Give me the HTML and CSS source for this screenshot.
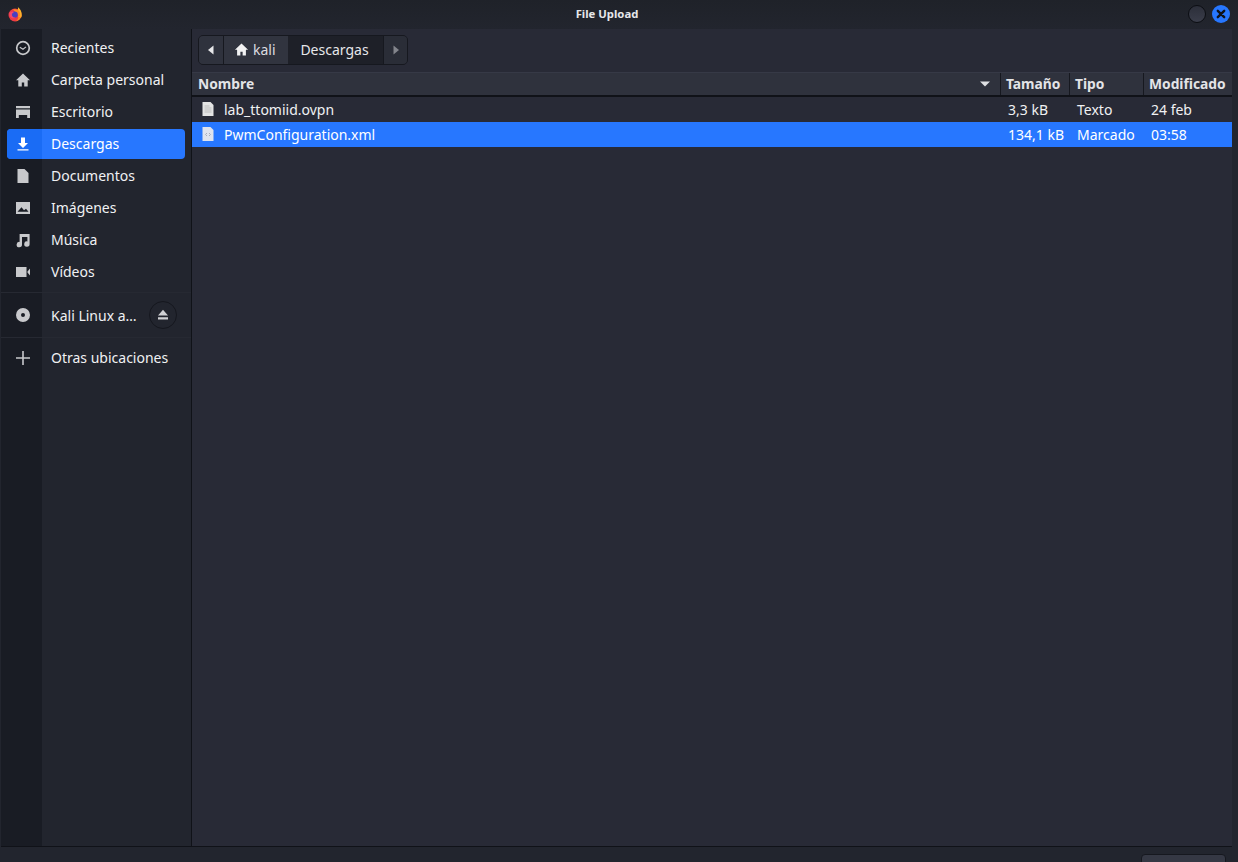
FILE: index.html
```
<!DOCTYPE html>
<html lang="es">
<head>
<meta charset="utf-8">
<title>File Upload</title>
<link rel="stylesheet" href="styles.css">
</head>
<body>
<div class="window">
  <header class="titlebar">
    <svg class="app-logo" viewBox="0 0 16 16" width="16" height="16">
      <circle cx="8" cy="9" r="6.500" fill="#ee3a45"/>
      <path d="M14.800 9.500C15 5.500 13 2.500 10.800 1c.5 1.500.2 2.600-.4 3.200C11.800 5 12.600 6.800 12.300 8.800L11 11l3 1z" fill="#fdb32b"/>
      <path d="M6 3.600C8.500 2.800 11 3.600 12.300 5.500 13.600 7.500 13.500 10.500 11.500 12.300 13.500 11.500 14.800 10 14.800 8 15 11.500 12 15 8.500 15.400 11 14 12 11.500 11 9z" fill="#ff8a1f"/>
      <circle cx="7.600" cy="8.600" r="3.200" fill="#4a3fc0"/>
      <path d="M2.800 6.600C4 5.600 6 5.500 7 6.200 5.400 6.800 4.600 8 5 9.500 5.400 11 7 11.800 8.400 11.500 7 12.800 4.600 12.600 3.300 11 2.400 9.800 2.300 8 2.800 6.600z" fill="#f4486a"/>
    </svg>
    <span class="title">File Upload</span>
    <div class="wm-buttons">
      <span class="wm-min"></span>
      <span class="wm-close">
        <svg viewBox="0 0 16 16" width="16" height="16"><path d="M4.800 4.800l6.400 6.400M11.200 4.800l-6.400 6.400" stroke="#10131a" stroke-width="2.400" stroke-linecap="round"/></svg>
      </span>
    </div>
  </header>

  <div class="body-row">
    <nav class="sidebar">
      <a class="place">
        <span class="place-icon"><svg viewBox="0 0 16 16" width="16" height="16"><circle cx="8" cy="8" r="6.300" fill="none" stroke="#c8c9cc" stroke-width="1.700"/><path d="M4.800 7.300L8 9.300l3-2.400" fill="none" stroke="#c8c9cc" stroke-width="1.200"/></svg></span>
        <span class="place-label">Recientes</span>
      </a>
      <a class="place">
        <span class="place-icon"><svg viewBox="0 0 16 16" width="16" height="16"><path d="M8 1.500L1 8.300h2.300V14.500h3.500v-4h2.400v4h3.500V8.300H15z" fill="#c8c9cc"/></svg></span>
        <span class="place-label">Carpeta personal</span>
      </a>
      <a class="place">
        <span class="place-icon"><svg viewBox="0 0 16 16" width="16" height="16"><path d="M1 2h14v2.300H1zM1 5.500h14V14h-2.800v-3H3.800v3H1z" fill="#c8c9cc"/></svg></span>
        <span class="place-label">Escritorio</span>
      </a>
      <a class="place place-active">
        <span class="place-icon"><svg viewBox="0 0 16 16" width="16" height="16"><path d="M6 1.500h4v5.500h3L8 12 3 7h3zM2.500 13.200h11v1.400h-11z" fill="#fff"/></svg></span>
        <span class="place-label">Descargas</span>
      </a>
      <a class="place">
        <span class="place-icon"><svg viewBox="0 0 16 16" width="16" height="16"><path d="M2.500 1h7l4 4v10h-11z" fill="#c8c9cc"/></svg></span>
        <span class="place-label">Documentos</span>
      </a>
      <a class="place">
        <span class="place-icon"><svg viewBox="0 0 16 16" width="16" height="16"><path fill-rule="evenodd" d="M1 2h14v12H1zM2.500 11.800h11L11 8.800l-2 1.500-2.500-3z" fill="#c8c9cc"/></svg></span>
        <span class="place-label">Imágenes</span>
      </a>
      <a class="place">
        <span class="place-icon"><svg viewBox="0 0 16 16" width="16" height="16"><path d="M4.600 2h10v10a2.700 2.700 0 1 1-2.200-2.600V5H7v7.500a2.700 2.700 0 1 1-2.400-2.600z" fill="#c8c9cc"/></svg></span>
        <span class="place-label">Música</span>
      </a>
      <a class="place">
        <span class="place-icon"><svg viewBox="0 0 16 16" width="16" height="16"><path d="M1 3h10.500v10H1zM12.500 7.500l2.500-3v7l-2.500-3z" fill="#c8c9cc"/></svg></span>
        <span class="place-label">Vídeos</span>
      </a>
      <div class="sep sep-first"></div>
      <a class="place place-volume">
        <span class="place-icon"><svg viewBox="0 0 16 16" width="16" height="16"><path fill-rule="evenodd" d="M8 1a7 7 0 1 1 0 14A7 7 0 0 1 8 1zm0 5a2 2 0 1 0 0 4 2 2 0 0 0 0-4z" fill="#c8c9cc"/></svg></span>
        <span class="place-label">Kali Linux a…</span>
        <span class="eject"><svg viewBox="0 0 16 16" width="16" height="16"><path d="M8 2.800l5 5.700H3zM3 10.300h10v2.200H3z" fill="#d0d1d4"/></svg></span>
      </a>
      <div class="sep sep-second"></div>
      <a class="place place-other">
        <span class="place-icon"><svg viewBox="0 0 16 16" width="16" height="16"><path d="M7.200 1h1.600v6.200H15v1.600H8.800V15H7.200V8.800H1V7.200h6.200z" fill="#c8c9cc"/></svg></span>
        <span class="place-label">Otras ubicaciones</span>
      </a>
    </nav>

    <main class="content">
      <div class="pathbar">
        <div class="path-group">
          <span class="path-btn path-arrow"><svg viewBox="0 0 16 16" width="16" height="16"><path d="M10.500 3.500v9L5 8z" fill="#e8e8ea"/></svg></span>
          <span class="path-btn path-home"><svg viewBox="0 0 16 16" width="16" height="16"><path d="M8 1.500L1 8.300h2.300V14.500h3.500v-4h2.400v4h3.500V8.300H15z" fill="#f2f2f3"/></svg><span>kali</span></span>
          <span class="path-btn path-current">Descargas</span>
          <span class="path-btn path-arrow path-next"><svg viewBox="0 0 16 16" width="16" height="16"><path d="M5.500 3.500v9L11 8z" fill="#83858c"/></svg></span>
        </div>
      </div>
      <div class="table">
        <div class="row header">
          <span class="col col-name col-name-head"><span>Nombre</span><svg viewBox="0 0 12 12" width="12" height="12"><path d="M1 3.500h10L6 8.500z" fill="#dfe0e3"/></svg></span>
          <span class="col col-size">Tamaño</span>
          <span class="col col-type">Tipo</span>
          <span class="col col-date">Modificado</span>
        </div>
        <div class="row file">
          <span class="col col-name">
            <svg class="file-icon" viewBox="0 0 14 16" width="14" height="16"><path d="M1.500 1h8l3 3v11h-11z" fill="#e4e4e4"/><path d="M3.500 5h5M3.500 7h7M3.500 9h7M3.500 11h7" stroke="#bdbdbd"/></svg>
            <span>lab_ttomiid.ovpn</span>
          </span>
          <span class="col col-size">3,3 kB</span>
          <span class="col col-type">Texto</span>
          <span class="col col-date">24 feb</span>
        </div>
        <div class="row file file-selected">
          <span class="col col-name">
            <svg class="file-icon" viewBox="0 0 14 16" width="14" height="16"><path d="M1.500 1h8l3 3v11h-11z" fill="#dfe3ee"/><path d="M6 7L4.500 8.500 6 10M8 7l1.500 1.500L8 10" fill="none" stroke="#a9aebb"/></svg>
            <span>PwmConfiguration.xml</span>
          </span>
          <span class="col col-size">134,1 kB</span>
          <span class="col col-type">Marcado</span>
          <span class="col col-date">03:58</span>
        </div>
      </div>
    </main>
  </div>

  <footer class="footer">
    <span class="footer-btn"></span>
  </footer>
</div>
</body>
</html>
```
FILE: styles.css
```
* { box-sizing: border-box; }
html, body { margin: 0; height: 100%; }
body {
  background: #22252e;
  color: #f0f1f3;
  font-family: "Noto Sans", "Open Sans", sans-serif;
  font-size: 14px;
  overflow: hidden;
}
.window { display: flex; flex-direction: column; width: 1238px; height: 862px; }

.titlebar {
  height: 29px;
  flex: none;
  display: flex;
  align-items: center;
  position: relative;
  padding-left: 7px;
  padding-bottom: 2px;
  background: linear-gradient(#1f2229, #22252e);
}
.app-logo { display: block; }
.title {
  position: absolute;
  left: 0; right: 0;
  top: 6px;
  text-align: center;
  font-size: 11.300px;
  font-weight: 700;
  line-height: 15px;
  color: #e6e7ea;
  padding-right: 24px;
  pointer-events: none;
}
.wm-buttons { margin-left: auto; display: flex; gap: 6px; padding-right: 8px; }
.wm-min, .wm-close { width: 18px; height: 18px; border-radius: 50%; display: flex; align-items: center; justify-content: center; }
.wm-min { background: linear-gradient(#2c2f3a, #3a3d4a); border: 1px solid #0c0e13; }
.wm-close { background: #2777ff; }

.body-row {
  flex: 1;
  display: flex;
  min-height: 0;
  margin: 0 6px 0 1px;
  border-bottom: 1px solid #101218;
}

.sidebar {
  width: 191px;
  flex: none;
  padding: 3px 0 0;
  background: linear-gradient(90deg, #191c24 41px, #22252e 41px);
  border-right: 1px solid #101218;
}
.place {
  display: flex;
  align-items: center;
  height: 32px;
  color: #f0f1f3;
}
.place-icon { width: 41px; flex: none; display: flex; justify-content: center; padding-left: 3px; }
.place-icon svg { display: block; }
.place-label { padding-left: 9px; padding-bottom: 1px; white-space: nowrap; }
.place-active {
  margin: 1px 6px;
  height: 30px;
  border-radius: 4px;
  background: #2777ff;
  color: #fff;
  overflow: hidden;
}
.place-active .place-icon {
  width: 35px;
  align-self: stretch;
  align-items: center;
  background: #1a6cf5;
  padding-left: 0;
  padding-right: 3px;
}
.sep { height: 1px; background: #262932; }
.sep-first { margin-top: 4px; }
.place-volume { height: 44px; }
.place-volume .place-label { flex: 1; min-width: 0; padding-bottom: 0; }
.eject {
  width: 28px;
  height: 28px;
  margin-right: 14px;
  border-radius: 50%;
  border: 1px solid #15171e;
  display: flex;
  align-items: center;
  justify-content: center;
  background: #22252e;
}
.place-other { height: 40px; }
.place-other .place-label { padding-bottom: 2px; }

.content { flex: 1; min-width: 0; background: #282a36; display: flex; flex-direction: column; }

.pathbar { height: 43px; flex: none; padding: 6px 0 0 6px; }
.path-group {
  display: inline-flex;
  height: 30px;
  border: 1px solid #16181f;
  border-radius: 5px;
  overflow: hidden;
  background: #1e2028;
}
.path-btn { display: flex; align-items: center; height: 100%; padding-bottom: 1px; }
.path-arrow { width: 25px; justify-content: center; background: #2f323d; border-right: 1px solid #16181f; }
.path-next { width: 24px; background: #2a2d37; border-right: 0; border-left: 1px solid #16181f; }
.path-home { width: 64px; gap: 4px; padding-left: 10px; background: #31343f; color: #dcdde0; }
.path-home svg { width: 15px; height: 15px; }
.path-current { width: 95px; padding-right: 2px; justify-content: center; background: #1e2028; color: #e6e7ea; }

.table { flex: 1; }
.row { display: flex; align-items: center; }
.col { display: flex; align-items: center; white-space: nowrap; flex: none; }
.col-name { flex: 1; min-width: 0; }
.col-size { width: 69px; }
.col-type { width: 74px; }
.col-date { width: 89px; }

.header {
  height: 25px;
  background: #2f323d;
  border-bottom: 2px solid #101218;
  border-top: 1px solid #363946;
  font-weight: 700;
  font-size: 13.800px;
  color: #e3e4e7;
}
.header .col { height: 100%; padding: 0 0 1px 5px; border-left: 1px solid #16181f; }
.header .col-name { border-left: 0; padding: 0 9px 1px 6px; justify-content: space-between; }
.header .col-name svg { display: block; }

.file { height: 25px; }
.file .col { padding-bottom: 1px; }
.file .col-name { padding-left: 9px; }
.file .col-size, .file .col-type, .file .col-date { padding-left: 8px; }
.file-icon { display: block; margin-right: 9px; flex: none; }
.file-selected { background: #2777ff; color: #fff; }

.footer {
  height: 15px;
  flex: none;
  display: flex;
  justify-content: flex-end;
  padding: 7px 12px 0 0;
  background: #22252e;
  overflow: hidden;
}
.footer-btn { width: 85px; height: 30px; flex: none; border-radius: 4px; border: 1px solid #16181f; background: #353844; }
```
